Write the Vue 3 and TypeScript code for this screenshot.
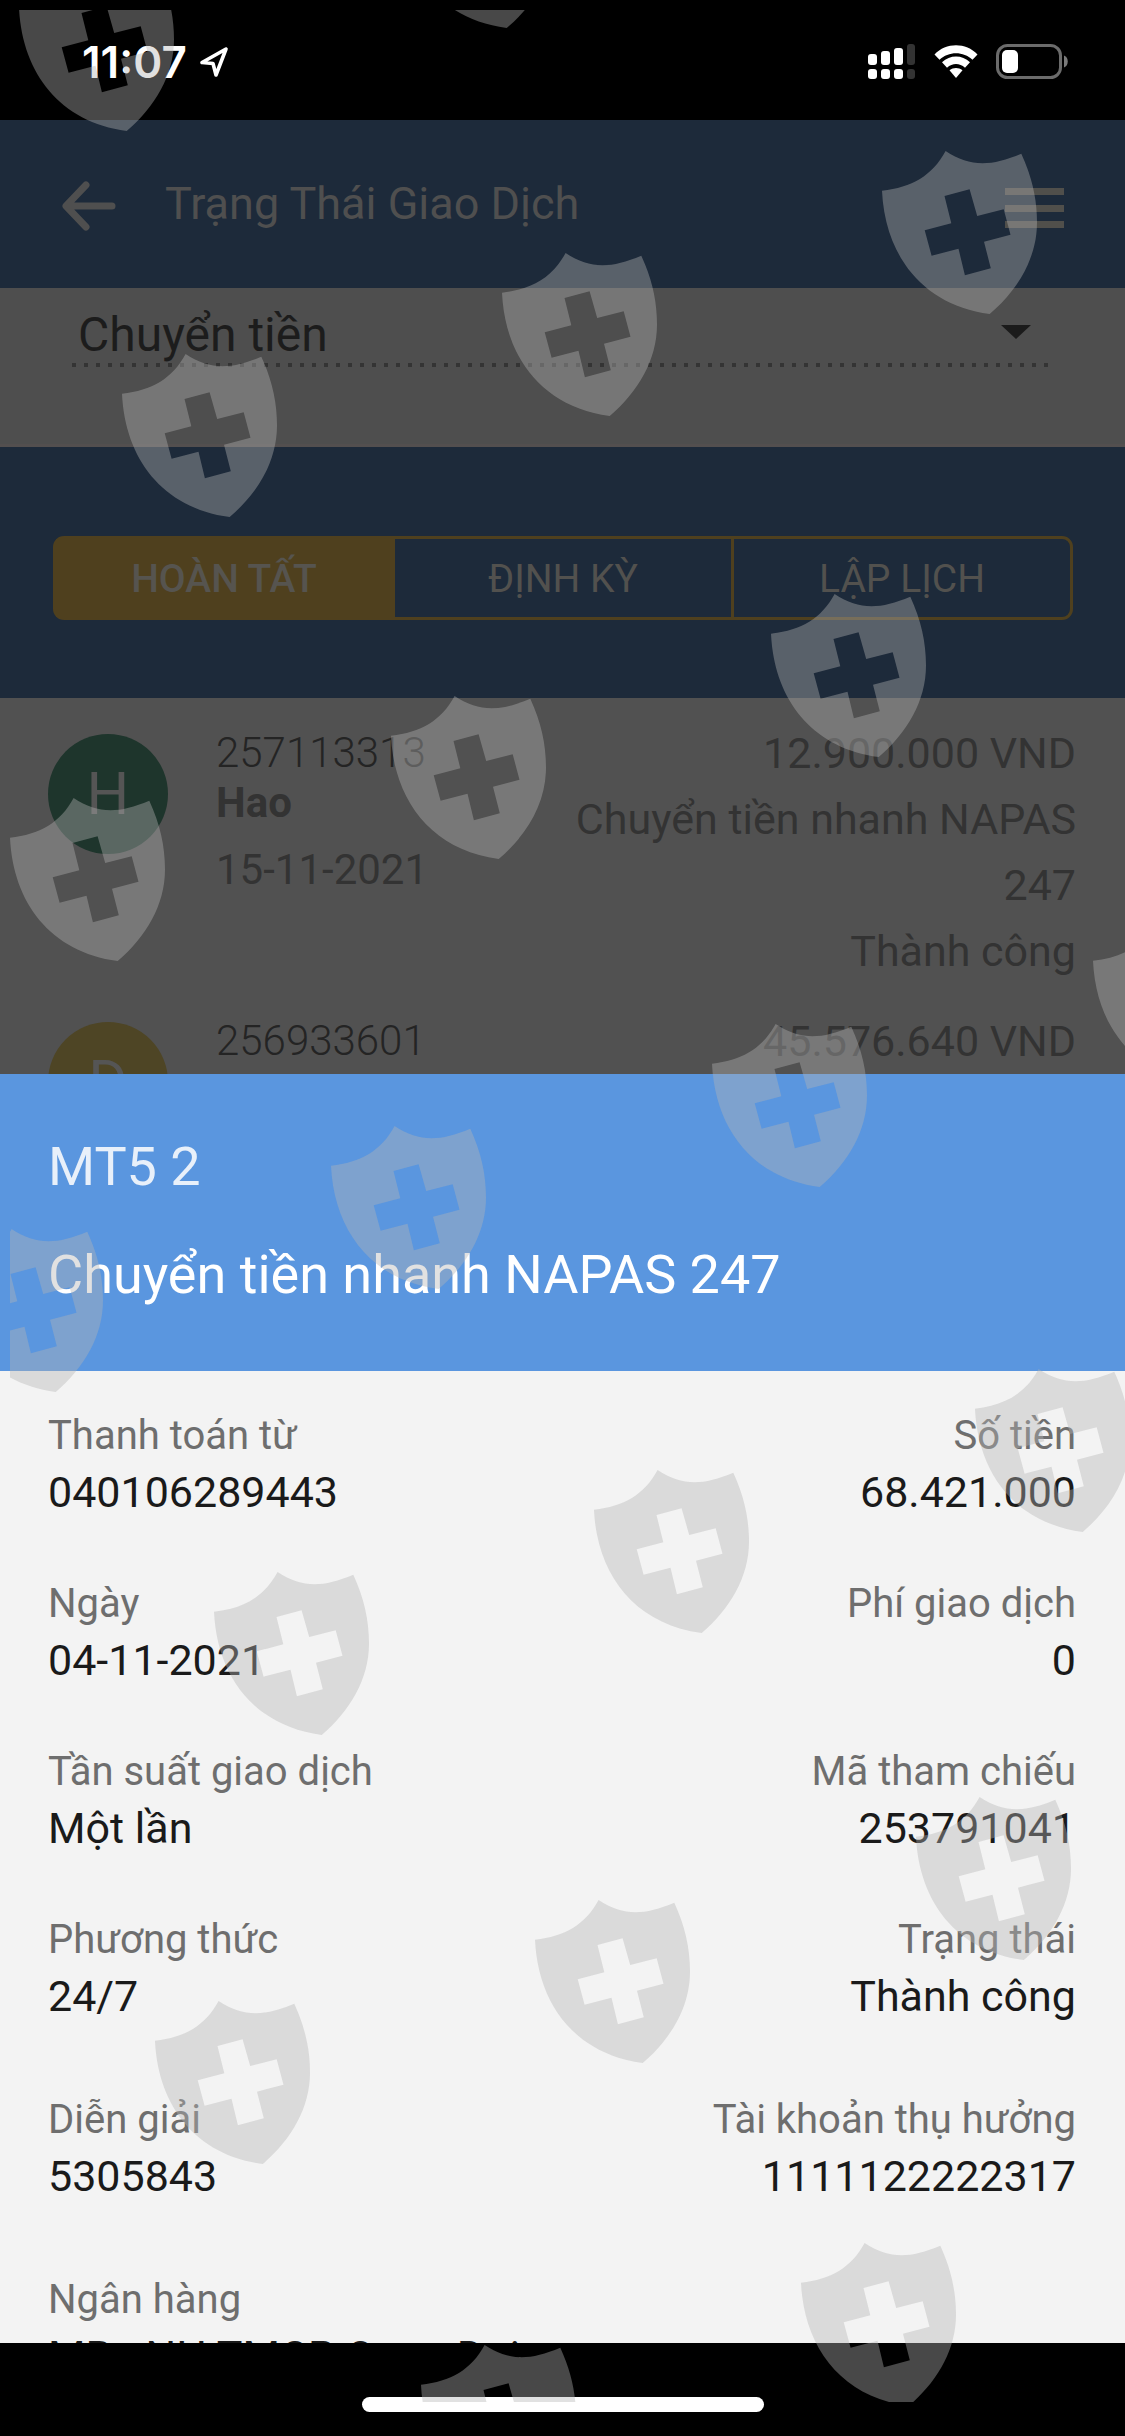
<script setup lang="ts">
import { ref } from 'vue'

interface Transaction {
  id: string
  initial: string
  name: string
  date: string
  amount: string
  kind: string
  status: string
  tone: 'green' | 'olive'
}

interface Field {
  label: string
  value: string
}

interface DetailRow {
  left: Field
  right?: Field
  spaced?: boolean
}

const category = ref('transfer')
const tabs = ['HOÀN TẤT', 'ĐỊNH KỲ', 'LẬP LỊCH']
const activeTab = ref(0)

const transactions: Transaction[] = [
  {
    id: '257113313',
    initial: 'H',
    name: 'Hao',
    date: '15-11-2021',
    amount: '12.900.000 VND',
    kind: 'Chuyển tiền nhanh NAPAS 247',
    status: 'Thành công',
    tone: 'green',
  },
  {
    id: '256933601',
    initial: 'D',
    name: '',
    date: '',
    amount: '45.576.640 VND',
    kind: '',
    status: '',
    tone: 'olive',
  },
]

const details: DetailRow[] = [
  {
    left: { label: 'Thanh toán từ', value: '040106289443' },
    right: { label: 'Số tiền', value: '68.421.000' },
  },
  {
    left: { label: 'Ngày', value: '04-11-2021' },
    right: { label: 'Phí giao dịch', value: '0' },
  },
  {
    left: { label: 'Tần suất giao dịch', value: 'Một lần' },
    right: { label: 'Mã tham chiếu', value: '253791041' },
  },
  {
    left: { label: 'Phương thức', value: '24/7' },
    right: { label: 'Trạng thái', value: 'Thành công' },
  },
  {
    left: { label: 'Diễn giải', value: '5305843' },
    right: { label: 'Tài khoản thụ hưởng', value: '1111122222317' },
    spaced: true,
  },
  {
    left: { label: 'Ngân hàng', value: 'MB - NH TMCP Quan Doi' },
    spaced: true,
  },
]

// Shield positions inside the watermark layer, as [x, y]
const shields: [number, number][] = [
  [9, -42], [389, -145], [872, 141], [492, 243], [112, 344],
  [761, 584], [381, 686], [0, 788], [1083, 911], [702, 1014],
  [321, 1116], [-62, 1219], [965, 1359], [584, 1460], [204, 1562],
  [906, 1787], [525, 1890], [145, 1991], [791, 2233], [411, 2335],
]
</script>

<template>
  <div class="device">
    <div class="status-bar">
      <div class="clock">
        <span>11:07</span>
        <svg width="30" height="32" viewBox="0 0 30 32" aria-hidden="true">
          <path d="M27 3 L3 16.500 L14 17.500 L17 29 Z" fill="none" stroke="#fff" stroke-width="3.600" stroke-linejoin="round" />
        </svg>
      </div>
      <div class="indicators">
        <svg width="48" height="36" viewBox="0 0 48 36" aria-hidden="true">
          <g fill="#fff">
            <rect x="0" y="10" width="9" height="11" rx="3" />
            <rect x="13" y="7" width="9" height="14" rx="3" />
            <rect x="26" y="4" width="9" height="17" rx="3" />
            <rect x="0" y="25" width="9" height="10" rx="3" />
            <rect x="13" y="25" width="9" height="10" rx="3" />
            <rect x="26" y="25" width="9" height="10" rx="3" />
          </g>
          <g fill="#333">
            <rect x="39" y="0" width="8" height="21" rx="3" />
            <rect x="39" y="25" width="8" height="10" rx="3" />
          </g>
        </svg>
        <svg width="44" height="34" viewBox="0 0 44 34" aria-hidden="true">
          <path d="M0.500 9.500 C12 -2.700 32 -2.700 43.500 9.500 L38.500 14.800 C29.500 6 14.500 6 5.500 14.800 Z" fill="#fff" />
          <path d="M8 17.300 C16 9.700 28 9.700 36 17.300 L31 22.700 C25.500 17.800 18.500 17.800 13 22.700 Z" fill="#fff" />
          <path d="M15.500 25.200 C19.300 22.200 24.700 22.200 28.500 25.200 L22 33 Z" fill="#fff" />
        </svg>
        <svg width="72" height="36" viewBox="0 0 72 36" aria-hidden="true">
          <rect x="1.500" y="1.500" width="63" height="32" rx="10" fill="none" stroke="#6b6b6b" stroke-width="3" />
          <rect x="6" y="6" width="16" height="23" rx="5" fill="#fff" />
          <path d="M68 11.500 C73 13 73 22 68 23.500 Z" fill="#7a7a7a" />
        </svg>
      </div>
    </div>

    <div class="stage">
      <main class="page">
        <header class="app-bar">
          <button class="back" type="button" aria-label="Quay lại">
            <svg width="54" height="50" viewBox="0 0 54 50" aria-hidden="true">
              <path d="M24 4 L4 25 L24 46 M5 25 H50" fill="none" stroke="#4f4f4f" stroke-width="7" stroke-linecap="round" stroke-linejoin="round" />
            </svg>
          </button>
          <h1>Trạng Thái Giao Dịch</h1>
          <button class="menu" type="button" aria-label="Menu">
            <svg width="59" height="40" viewBox="0 0 59 40" aria-hidden="true">
              <path d="M0 0 H59 V7 H0 Z M0 17 H59 V24 H0 Z M0 33 H59 V40 H0 Z" fill="#504f4b" />
            </svg>
          </button>
        </header>

        <section class="filter">
          <div class="select-line">
            <select v-model="category" aria-label="Loại giao dịch">
              <option value="transfer">Chuyển tiền</option>
            </select>
            <svg class="caret" width="30" height="14" viewBox="0 0 30 14" aria-hidden="true">
              <path d="M0 0 H30 L15 14 Z" fill="#1b1b1b" />
            </svg>
          </div>
        </section>

        <nav class="tab-section">
          <div class="tabs">
            <button
              v-for="(tab, index) in tabs"
              :key="tab"
              type="button"
              :class="{ active: activeTab === index }"
              @click="activeTab = index"
            >
              {{ tab }}
            </button>
          </div>
        </nav>

        <ul class="transactions">
          <li v-for="item in transactions" :key="item.id">
            <span class="avatar" :class="item.tone">{{ item.initial }}</span>
            <div class="party">
              <span class="number">{{ item.id }}</span>
              <strong>{{ item.name }}</strong>
              <span class="date">{{ item.date }}</span>
            </div>
            <div class="summary">
              <span>{{ item.amount }}</span>
              <span>{{ item.kind }}</span>
              <span>{{ item.status }}</span>
            </div>
          </li>
        </ul>
      </main>

      <section class="sheet" role="dialog" aria-label="Chuyển tiền nhanh NAPAS 247">
        <header class="sheet-header">
          <p>MT5 2</p>
          <h2>Chuyển tiền nhanh NAPAS 247</h2>
        </header>
        <div class="details">
          <dl v-for="row in details" :key="row.left.label" :class="{ spaced: row.spaced }">
            <div>
              <dt>{{ row.left.label }}</dt>
              <dd>{{ row.left.value }}</dd>
            </div>
            <div v-if="row.right" class="end">
              <dt>{{ row.right.label }}</dt>
              <dd>{{ row.right.value }}</dd>
            </div>
          </dl>
        </div>
      </section>
    </div>

    <div class="home-area">
      <div class="home-indicator"></div>
    </div>

    <div class="watermark" aria-hidden="true">
      <svg width="100%" height="100%">
        <defs>
          <path
            id="shield"
            fill-rule="evenodd"
            d="M0 39.700 C30 36.200 50 25 63.600 0 C88 15.800 108 15.800 139.300 2.700 C150 26 155 48 155 71.500 C155 107 136 139 107.700 163 C40 154 3 104 0 39.700 Z M62.500 45 L69.300 72.300 L42.700 79.300 L49.600 104.700 L76.500 97.700 L82.900 124.300 L108.800 117.300 L102 90.700 L128.500 83.700 L121.700 58.300 L95.200 65 L87.600 38.300 Z"
          />
        </defs>
        <use v-for="([x, y], index) in shields" :key="index" href="#shield" :x="x" :y="y" />
      </svg>
    </div>
  </div>
</template>

<style>
body {
  margin: 0;
  background: #000;
}
</style>

<style scoped>
.device {
  position: relative;
  display: flex;
  flex-direction: column;
  height: 100vh;
  overflow: hidden;
  background: #000;
  font-family: Roboto, "Noto Sans", sans-serif;
}

h1,
h2,
p,
ul,
dl,
dd {
  margin: 0;
  padding: 0;
  font-weight: 400;
}

button {
  margin: 0;
  padding: 0;
  border: 0;
  background: none;
  font: inherit;
}

svg {
  display: block;
}

.status-bar {
  display: flex;
  flex: none;
  align-items: center;
  justify-content: space-between;
  height: 120px;
  padding: 3px 57px 0 82px;
  box-sizing: border-box;
}

.clock {
  display: flex;
  align-items: center;
  gap: 12px;
  color: #fff;
  font: 600 44px/50px Inter, sans-serif;
}

.indicators {
  display: flex;
  align-items: center;
  gap: 18px;
}

.stage {
  position: relative;
  flex: 1;
  min-height: 0;
  overflow: hidden;
}

.page {
  background: #515151;
}

.app-bar {
  display: flex;
  align-items: center;
  height: 168px;
  padding: 0 61px 0 62px;
  background: #1d2a3a;
}

.app-bar h1 {
  flex: 1;
  padding-left: 49px;
  color: #4f4f4f;
  font-size: 45px;
  line-height: 60px;
}

.back {
  padding-top: 3px;
}

.menu {
  padding-top: 8px;
}

.filter {
  height: 156px;
  border-bottom: 3px solid #534f4f;
  background: #4e4e4e;
}

.select-line {
  position: relative;
  margin: 0 76px 0 72px;
  padding-top: 19px;
}

.select-line::after {
  display: block;
  height: 4px;
  background: repeating-linear-gradient(90deg, #343434 0 4px, transparent 4px 12px);
  content: "";
}

.select-line select {
  display: block;
  width: 100%;
  padding: 0 0 0 6px;
  border: 0;
  background: none;
  color: #1c1c1c;
  font: 400 48px/56px Roboto, "Noto Sans", sans-serif;
  appearance: none;
}

.caret {
  position: absolute;
  top: 37px;
  right: 18px;
  pointer-events: none;
}

.tab-section {
  padding: 89px 52px 78px 53px;
  background: #1d2a3a;
}

.tabs {
  display: flex;
  border: 3px solid #4f401e;
  border-radius: 11px;
}

.tabs button {
  flex: 1;
  padding-top: 2px;
  color: #52514e;
  font-size: 39px;
  line-height: 76px;
}

.tabs button + button {
  border-left: 3px solid #4f401e;
}

.tabs .active {
  background: #4f401e;
  color: #56544f;
  font-weight: 500;
}

.transactions {
  list-style: none;
}

.transactions li {
  display: flex;
  align-items: flex-start;
  min-height: 264px;
  padding: 22px 49px 2px 48px;
}

.avatar {
  flex: none;
  width: 120px;
  margin-top: 14px;
  border-radius: 50%;
  color: #555;
  font-size: 60px;
  line-height: 120px;
  text-align: center;
}

.green {
  background: #1e352c;
}

.olive {
  background: #4e4525;
}

.party {
  display: flex;
  flex: 1;
  flex-direction: column;
  padding: 8px 0 0 48px;
  color: #333;
  font-size: 42px;
  line-height: 50px;
}

.number {
  color: #242424;
  font-weight: 300;
}

.party strong {
  font-weight: 700;
}

.date {
  margin-top: 17px;
}

.summary {
  display: flex;
  flex-direction: column;
  width: 50%;
  color: #333;
  font-size: 43px;
  line-height: 66px;
  text-align: right;
}

.sheet {
  position: absolute;
  inset: 954px 0 0;
  overflow-y: auto;
  background: #f3f3f3;
  scrollbar-width: none;
}

.sheet-header {
  display: flex;
  flex-direction: column;
  gap: 48px;
  padding: 63px 48px 66px;
  background: #5a96df;
  color: #fff;
}

.sheet-header p,
.sheet-header h2 {
  font-size: 54px;
  line-height: 60px;
}

.sheet-header p {
  color: #e8f0fa;
}

.details {
  display: flex;
  flex-direction: column;
  gap: 56px;
  padding: 38px 49px 48px 48px;
}

.details dl {
  display: flex;
  justify-content: space-between;
}

.details .spaced {
  margin-top: 12px;
}

.details dt {
  color: #6e6e6e;
  font-size: 40px;
  line-height: 54px;
}

.details dd {
  color: #1a1a1a;
  font-size: 43px;
  line-height: 58px;
}

.end {
  text-align: right;
}

.home-area {
  flex: none;
  padding: 54px 0 24px;
}

.home-indicator {
  width: 402px;
  height: 15px;
  margin: 0 auto;
  border-radius: 8px;
  background: #fff;
}

.watermark {
  position: absolute;
  inset: 10px 0 34px 10px;
  overflow: hidden;
  pointer-events: none;
  fill: #b4b4b4;
  fill-opacity: 0.4;
}
</style>
